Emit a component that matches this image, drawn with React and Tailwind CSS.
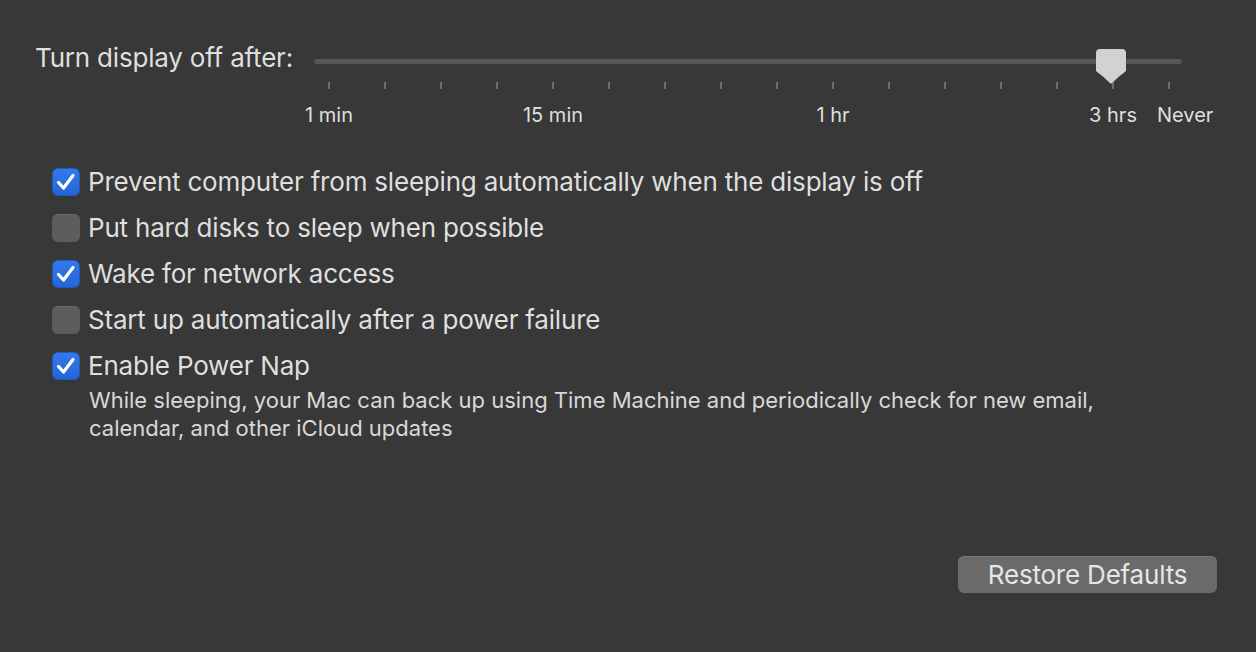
import React from 'react';

const ticks = Array.from({ length: 16 });

const labels = [
  { text: '1 min', left: 'left-[15px]' },
  { text: '15 min', left: 'left-[239px]' },
  { text: '1 hr', left: 'left-[519px]' },
  { text: '3 hrs', left: 'left-[799px]' },
];

const options = [
  { label: 'Prevent computer from sleeping automatically when the display is off', checked: true },
  { label: 'Put hard disks to sleep when possible', checked: false },
  { label: 'Wake for network access', checked: true },
  { label: 'Start up automatically after a power failure', checked: false },
  { label: 'Enable Power Nap', checked: true },
];

const Checkbox = ({ checked }) =>
  checked ? (
    <div className="w-[28px] h-[28px] rounded-[6px] bg-gradient-to-b from-[#3478ec] to-[#2466d6] border border-[#1e5cc4] flex items-center justify-center shrink-0">
      <svg width="20" height="18" viewBox="0 0 20 18" fill="none">
        <path d="M2.5 9.5 L7.5 15 L17 2.5" stroke="#ffffff" strokeWidth="3.2" strokeLinecap="round" strokeLinejoin="round" />
      </svg>
    </div>
  ) : (
    <div className="w-[28px] h-[28px] rounded-[6px] bg-[#5d5d5d] border-t border-[#6a6a6a] shrink-0" />
  );

const Thumb = () => (
  <svg width="30" height="35" viewBox="0 0 30 35" className="absolute left-[782px] top-[4px]">
    <path d="M4 0 H26 Q30 0 30 4 V22 Q22 28 15.5 34.5 H14.5 Q8 28 0 22 V4 Q0 0 4 0 Z" fill="#d2d2d2" />
  </svg>
);

export default function App() {
  return (
    <div className="w-[1256px] h-[652px] bg-[#383838] flex flex-col font-['Inter',_'Liberation_Sans',_sans-serif] text-[#dfdfdf] overflow-hidden">
      {/* slider row */}
      <div className="flex pt-[45px] pl-[35px]">
        <div className="w-[279px] text-[26px] leading-[26px] tracking-[-0.2px]">Turn display off after:</div>
        <div className="relative w-[900px] h-[90px]">
          <div className="mt-[14px] w-[868px] h-[5px] rounded-full bg-[#575757]" />
          <div className="mt-[18px] ml-[14px] w-[842px] flex justify-between">
            {ticks.map((_, i) => (
              <div key={i} className="w-[2px] h-[7px] bg-[#6c6c6c]" />
            ))}
          </div>
          <Thumb />
          {labels.map((l) => (
            <div key={l.text} className={`absolute top-[58px] ${l.left} -translate-x-1/2 text-[20px] leading-[24px] whitespace-nowrap`}>
              {l.text}
            </div>
          ))}
          <div className="absolute top-[58px] left-[843px] text-[20px] leading-[24px]">Never</div>
        </div>
      </div>

      {/* checkboxes */}
      <div className="mt-[33px] pl-[52px] flex flex-col gap-[18px]">
        {options.map((o) => (
          <div key={o.label} className="flex items-center gap-[8px] h-[28px]">
            <Checkbox checked={o.checked} />
            <span className="text-[26px] leading-[28px] tracking-[-0.2px] whitespace-nowrap">{o.label}</span>
          </div>
        ))}
      </div>
      <p className="mt-[6px] ml-[89px] w-[1040px] text-[22px] leading-[28px] text-[#d8d8d8]">
        While sleeping, your Mac can back up using Time Machine and periodically check for new email, calendar, and other iCloud updates
      </p>

      {/* footer */}
      <div className="mt-auto pb-[59px] pr-[39px] flex justify-end">
        <button className="w-[259px] h-[37px] rounded-[6px] bg-[#6a6a6a] border-t border-[#787878] text-[26px] leading-[30px] tracking-[-0.2px] text-[#e6e6e6]">
          Restore Defaults
        </button>
      </div>
    </div>
  );
}
